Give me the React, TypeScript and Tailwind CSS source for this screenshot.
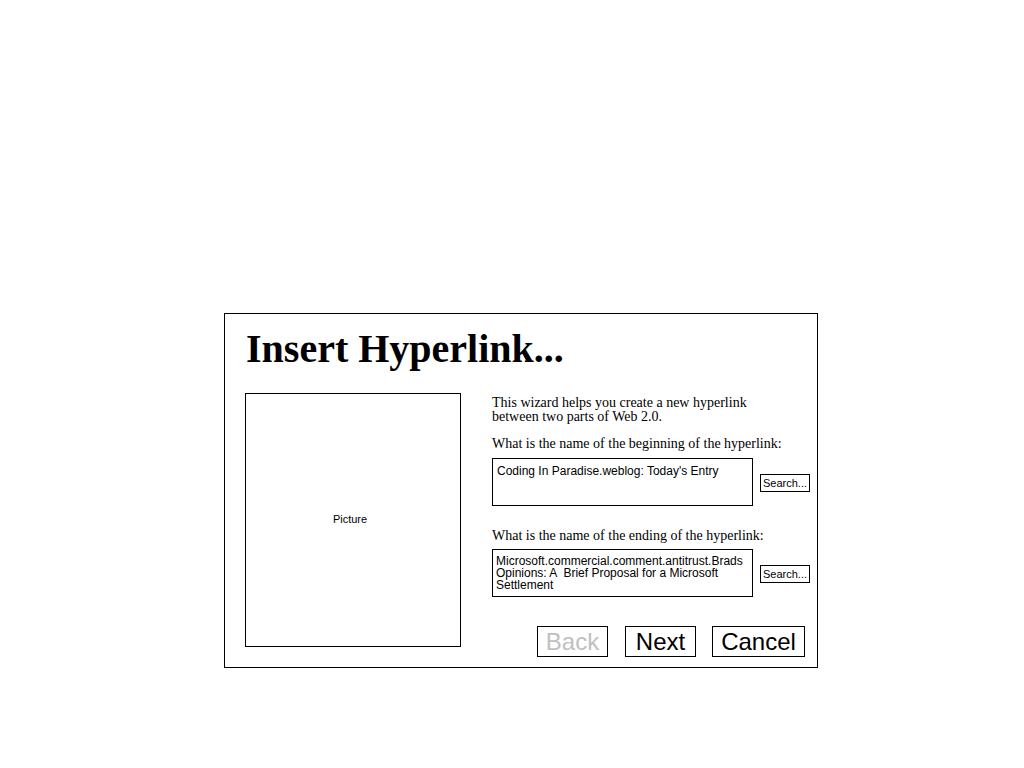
import { FC } from "react";

const serif = "font-['Liberation_Serif','Times_New_Roman',serif]";
const sans = "font-['Liberation_Sans',Arial,sans-serif]";

const SearchButton: FC = () => (
  <div
    className={`ml-[7px] mt-[2px] flex h-[18px] w-[50px] items-center border border-black pl-[2px] text-[11px] leading-none text-black ${sans}`}
  >
    Search...
  </div>
);

const WizardButton: FC<{ label: string; width: string; disabled?: boolean }> = ({
  label,
  width,
  disabled,
}) => (
  <div
    className={`flex h-[31px] items-center justify-center border border-black text-[24px] leading-none ${width} ${sans} ${
      disabled ? "text-[#c0c0c0]" : "text-black"
    }`}
  >
    {label}
  </div>
);

export default function App() {
  return (
    <div className="min-h-[768px] w-[1024px] bg-white pl-[224px] pt-[313px]">
      <div className="flex h-[355px] w-[594px] flex-col border border-black">
        <h1
          className={`pl-[21px] pt-[15px] text-[40px] font-bold leading-[40px] text-black ${serif}`}
        >
          Insert Hyperlink...
        </h1>

        <div className="mt-[24px] flex">
          <div
            className={`ml-[20px] flex h-[254px] w-[216px] items-center justify-center border border-black pb-[2px] pr-[6px] text-[11px] text-black ${sans}`}
          >
            Picture
          </div>

          <div className="ml-[31px] flex w-[318px] flex-col">
            <p className={`mt-[3px] text-[14px] leading-[14px] text-black ${serif}`}>
              This wizard helps you create a new hyperlink
              <br />
              between two parts of Web 2.0.
            </p>

            <p className={`mt-[13px] text-[14px] leading-[14px] text-black ${serif}`}>
              What is the name of the beginning of the hyperlink:
            </p>
            <div className="mt-[7px] flex items-center">
              <div
                className={`h-[48px] w-[261px] border border-black px-[4px] pt-[6px] text-[12px] leading-[12px] text-black ${sans}`}
              >
                Coding In Paradise.weblog: Today's Entry
              </div>
              <SearchButton />
            </div>

            <p className={`mt-[23px] text-[14px] leading-[14px] text-black ${serif}`}>
              What is the name of the ending of the hyperlink:
            </p>
            <div className="mt-[6px] flex items-center">
              <div
                className={`h-[48px] w-[261px] whitespace-pre-wrap border border-black px-[3px] pt-[5px] text-[12px] leading-[12px] text-black ${sans}`}
              >
                {"Microsoft.commercial.comment.antitrust.Brads Opinions: A  Brief Proposal for a Microsoft Settlement"}
              </div>
              <SearchButton />
            </div>

            <div className="mt-[29px] flex justify-end pr-[5px]">
              <WizardButton label="Back" width="w-[71px]" disabled />
              <div className="ml-[17px]">
                <WizardButton label="Next" width="w-[71px]" />
              </div>
              <div className="ml-[16px]">
                <WizardButton label="Cancel" width="w-[93px]" />
              </div>
            </div>
          </div>
        </div>
      </div>
    </div>
  );
}
